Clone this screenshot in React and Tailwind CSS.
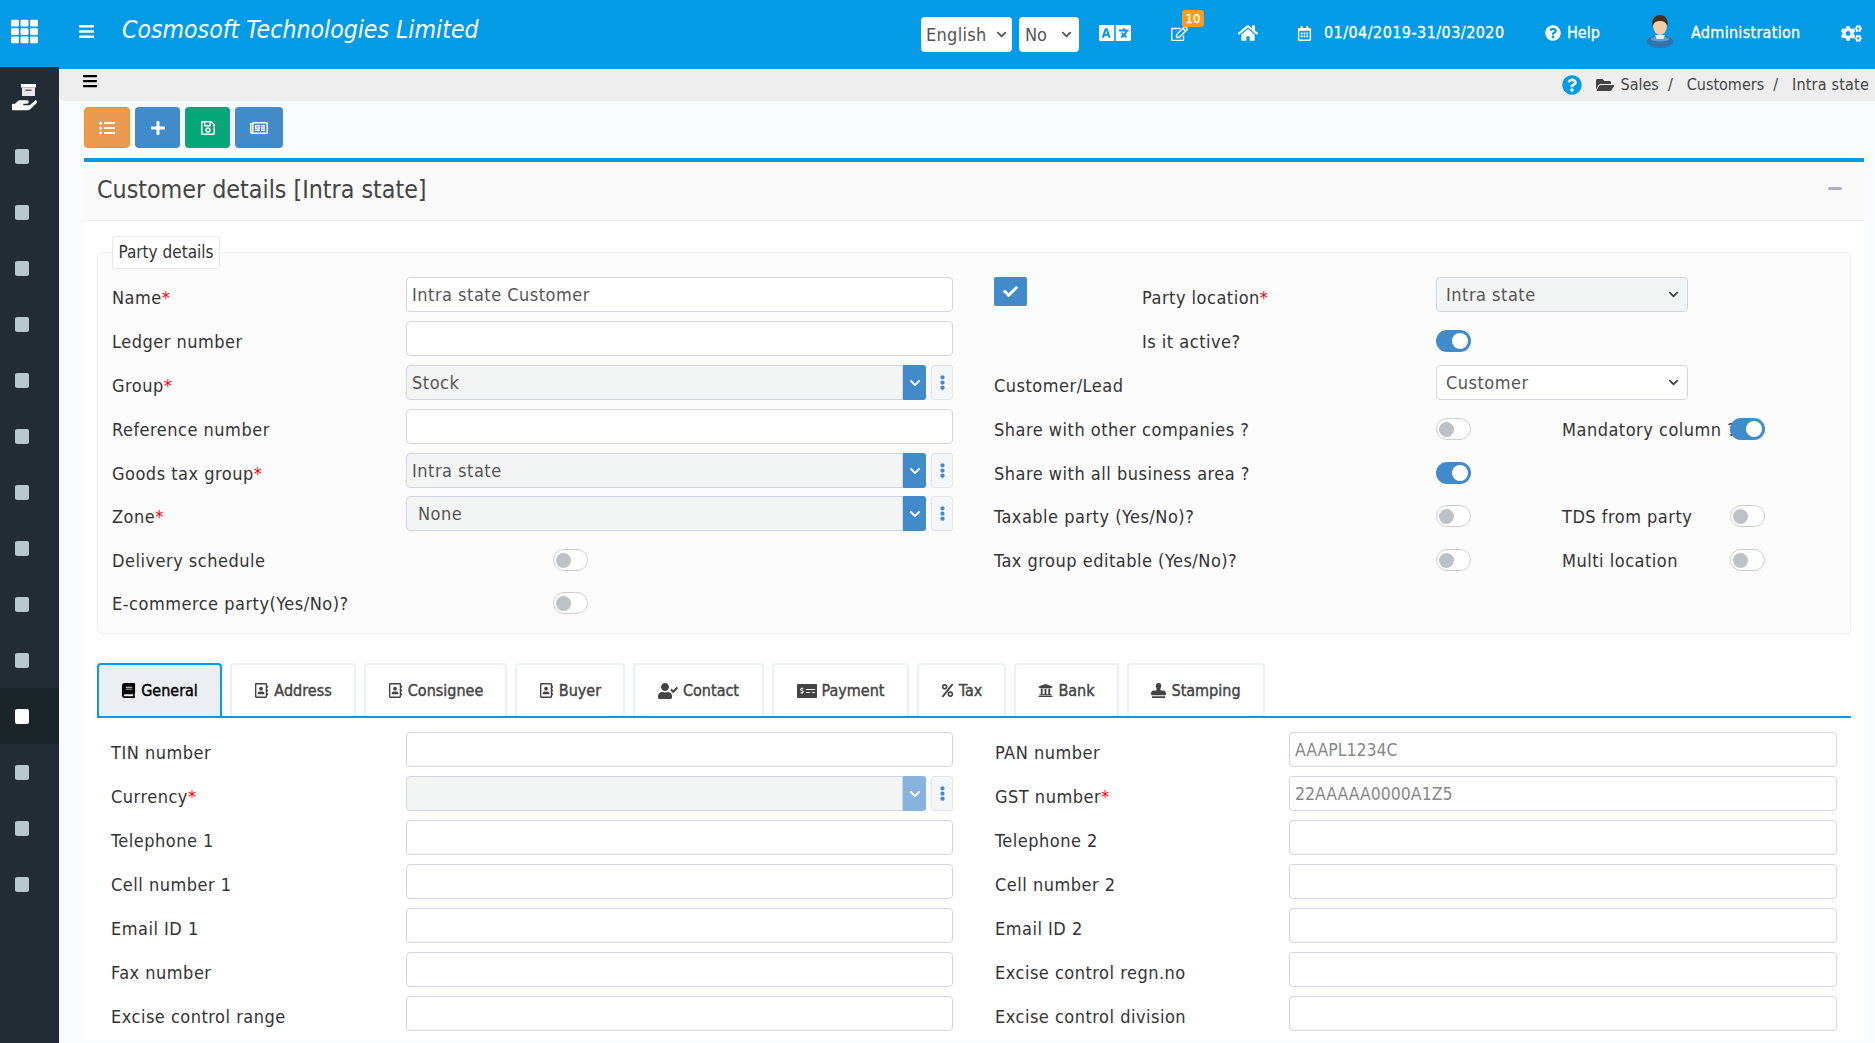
import React from 'react';
import {
  FaTh, FaBars, FaLanguage, FaRegEdit, FaHome, FaRegCalendarAlt, FaQuestionCircle, FaCogs, FaFolderOpen,
  FaListUl, FaPlus, FaRegSave, FaRegNewspaper, FaCheck, FaChevronDown, FaEllipsisV, FaBook, FaRegAddressBook,
  FaUserCheck, FaMoneyCheckAlt, FaPercent, FaUniversity, FaStamp, FaHandHolding,
} from 'react-icons/fa';

const Req = () => <span className="text-[#ff0000]">*</span>;

const Label = ({ children, req, className = '' }) => (
  <div className={`text-[18px] tracking-[0.5px] text-[#333] whitespace-nowrap pt-[7px] ${className}`}>
    {children}
    {req && <Req />}
  </div>
);

const TextBox = ({ value, dim }) => (
  <div className={`h-[35px] w-full border border-[#d3d5e0] rounded-[4px] bg-white px-[5px] ${dim ? 'text-[17.5px] leading-[35px] text-[#888]' : 'text-[18px] leading-[33px] tracking-[0.5px] text-[#555]'}`}>
    {value}
  </div>
);

const Picker = ({ value, disabled, pad = 'pl-[5px]' }) => (
  <div className="flex h-[35px] w-[547px]">
    <div className={`flex-1 h-full border border-[#d3d5e0] rounded-l-[4px] bg-[#f3f5f5] text-[18px] tracking-[0.5px] leading-[33px] text-[#555] ${pad}`}>{value}</div>
    <div className={`w-[23px] h-full rounded-r-[3px] flex items-center justify-center text-white ${disabled ? 'bg-[#86b4dc]' : 'bg-[#428bca]'}`}>
      <FaChevronDown size={12} />
    </div>
    <div className="w-[22px] h-full ml-[5px] border border-[#e3e5ea] rounded-[3px] bg-[#f5f6f7] flex items-center justify-center text-[#428bca]">
      <FaEllipsisV size={15} />
    </div>
  </div>
);

const Toggle = ({ on, className = '' }) => (
  on ? (
    <div className={`w-[35px] h-[22px] rounded-full bg-[#428bca] flex items-center justify-end pr-[3px] ${className}`}>
      <div className="w-[16px] h-[16px] rounded-full bg-white" />
    </div>
  ) : (
    <div className={`w-[35px] h-[22px] rounded-full border border-[#ccd0d5] bg-white flex items-center pl-[2px] ${className}`}>
      <div className="w-[15px] h-[15px] rounded-full bg-[#bcc2c6]" />
    </div>
  )
);

const NativeSelect = ({ value, tint }) => (
  <div className={`h-[35px] w-[252px] border border-[#d3d5e0] rounded-[4px] flex items-center justify-between pl-[9px] pr-[8px] text-[18px] tracking-[0.5px] text-[#555] ${tint ? 'bg-[#f3f5f5]' : 'bg-white'}`}>
    {value}
    <FaChevronDown size={11} className="text-[#444]" />
  </div>
);

const leftRows = [
  { label: 'Name', req: true, h: 'h-[44px]', control: <TextBox value="Intra state Customer" /> },
  { label: 'Ledger number', h: 'h-[44px]', control: <TextBox /> },
  { label: 'Group', req: true, h: 'h-[44px]', control: <Picker value="Stock" /> },
  { label: 'Reference number', h: 'h-[44px]', control: <TextBox /> },
  { label: 'Goods tax group', req: true, h: 'h-[43px]', control: <Picker value="Intra state" /> },
  { label: 'Zone', req: true, h: 'h-[44px]', control: <Picker value="None" pad="pl-[11px]" /> },
  { label: 'Delivery schedule', h: 'h-[43px]', control: <Toggle className="ml-[147px] mt-[9px]" /> },
  { label: 'E-commerce party(Yes/No)?', h: 'h-[44px]', control: <Toggle className="ml-[147px] mt-[9px]" /> },
];

// one row of the right half of party details
const SwitchRow = ({ label, on, h = 'h-[44px]', second, secondOn }) => (
  <div className={`flex ${h}`}>
    <Label className="w-[442px]">{label}</Label>
    <Toggle on={on} className="mt-[9px]" />
    {second && (
      <>
        <Label className="w-[168px] ml-[91px]">{second}</Label>
        <Toggle on={secondOn} className="mt-[9px] relative" />
      </>
    )}
  </div>
);

const tabs = [
  { name: 'General', Icon: FaBook, w: 'w-[125px]', size: 15 },
  { name: 'Address', Icon: FaRegAddressBook, w: 'w-[126px]', size: 15 },
  { name: 'Consignee', Icon: FaRegAddressBook, w: 'w-[143px]', size: 15 },
  { name: 'Buyer', Icon: FaRegAddressBook, w: 'w-[110px]', size: 15 },
  { name: 'Contact', Icon: FaUserCheck, w: 'w-[131px]', size: 20 },
  { name: 'Payment', Icon: FaMoneyCheckAlt, w: 'w-[137px]', size: 20 },
  { name: 'Tax', Icon: FaPercent, w: 'w-[89px]', size: 13 },
  { name: 'Bank', Icon: FaUniversity, w: 'w-[105px]', size: 15 },
  { name: 'Stamping', Icon: FaStamp, w: 'w-[138px]', size: 15 },
];

const generalRows = [
  ['TIN number', <TextBox />, 'PAN number', <TextBox value="AAAPL1234C" dim />],
  ['Currency', <Picker disabled />, 'GST number', <TextBox value="22AAAAA0000A1Z5" dim />, true],
  ['Telephone 1', <TextBox />, 'Telephone 2', <TextBox />],
  ['Cell number 1', <TextBox />, 'Cell number 2', <TextBox />],
  ['Email ID 1', <TextBox />, 'Email ID 2', <TextBox />],
  ['Fax number', <TextBox />, 'Excise control regn.no', <TextBox />],
  ['Excise control range', <TextBox />, 'Excise control division', <TextBox />],
];

const Avatar = () => (
  <svg width="28" height="33" viewBox="0 0 28 33">
    <ellipse cx="14" cy="26.5" rx="13" ry="6.5" fill="#2f74ae" />
    <ellipse cx="14" cy="24" rx="9" ry="2.5" fill="#5f9fd2" />
    <path d="M9 20h10l-1.5 4h-7z" fill="#e8eef2" />
    <ellipse cx="14" cy="11" rx="7" ry="9" fill="#f3cfa8" />
    <path d="M6.5 12C5 3 10 0 14 0s9 3 7.500 12c-1-4-3-6-7.500-6s-6.500 2-7.500 6z" fill="#4a2c1a" />
  </svg>
);

const BoxInHand = () => (
  <div className="flex flex-col items-start text-white">
    <svg width="15" height="12" viewBox="0 0 15 12" className="ml-[9px]">
      <rect x="0" y="0" width="15" height="3.500" fill="#fff" />
      <rect x="1" y="3.500" width="13" height="8.500" fill="#e6e8ea" />
      <rect x="4.500" y="5.500" width="6" height="1.500" fill="#5a646a" />
    </svg>
    <FaHandHolding size={25} className="-mt-[14px] origin-top scale-y-[1.2]" />
  </div>
);

const App = () => {
  return (
    <div className="h-screen overflow-hidden flex flex-col bg-[#fafbfe] text-[#333] font-['DejaVu_Sans_Condensed','DejaVu_Sans',sans-serif] [font-stretch:condensed]">
      {/* top bar */}
      <div className="h-[69px] shrink-0 bg-[#039be5] text-white flex items-center relative z-10">
        <FaTh size={27} className="ml-[11px] -mt-[6px]" />
        <FaBars size={17} className="ml-[40px] -mt-[6px]" />
        <div className="ml-[27px] -mt-[8px] italic text-[24.6px]">Cosmosoft Technologies Limited</div>
        <div className="ml-auto -mt-[3px] flex items-center text-[16px] [-webkit-text-stroke:0.3px]">
          <div className="w-[91px] h-[35px] bg-white rounded-[4px] text-[#555] text-[18px] tracking-[0.3px] [-webkit-text-stroke:0px] flex items-center justify-between pl-[5px] pr-[5px] mt-[2px]">
            English <FaChevronDown size={11} />
          </div>
          <div className="w-[60px] h-[35px] ml-[7px] bg-white rounded-[4px] text-[#555] text-[18px] [-webkit-text-stroke:0px] flex items-center justify-between pl-[6px] pr-[7px] mt-[2px]">
            No <FaChevronDown size={11} />
          </div>
          <FaLanguage size={32} className="ml-[20px]" />
          <div className="relative ml-[40px]">
            <FaRegEdit size={17} />
            <span className="absolute -top-[15px] left-[11px] w-[22px] h-[17px] rounded-[3px] bg-[#f99b1c] text-[13px] leading-[17px] text-center">10</span>
          </div>
          <FaHome size={20} className="ml-[50px]" />
          <FaRegCalendarAlt size={15} className="ml-[39px]" />
          <span className="ml-[12px] w-[181px] tracking-[0.45px]">01/04/2019-31/03/2020</span>
          <FaQuestionCircle size={16} className="ml-[40px]" />
          <span className="ml-[6px] w-[35px]">Help</span>
          <div className="ml-[44px] -mt-[3px]"><Avatar /></div>
          <span className="ml-[17px] w-[109px] tracking-[0.3px]">Administration</span>
          <FaCogs size={21} className="ml-[41px] mr-[13px]" />
        </div>
      </div>

      <div className="flex-1 flex min-h-0">
        {/* sidebar */}
        <div className="w-[59px] shrink-0 bg-[#212d33] -mt-[2px] flex flex-col items-stretch relative z-20">
          <div className="h-[61px] pl-[12px] pt-[17px]">
            <BoxInHand />
          </div>
          {Array.from({ length: 14 }).map((_, i) => (
            <div key={i} className={`h-[56px] flex items-center pl-[15px] ${i === 10 ? 'bg-[#1b2429]' : ''}`}>
              <div className={`w-[14px] h-[15px] rounded-[2px] ${i === 10 ? 'bg-white' : 'bg-[#b8c7ce]'}`} />
            </div>
          ))}
        </div>

        <div className="flex-1 min-w-0">
          {/* breadcrumb */}
          <div className="h-[32px] bg-[#eeeeee] rounded-bl-[6px] flex items-center text-[16px]">
            <FaBars size={16} className="ml-[23px] -mt-[8px] text-black" />
            <div className="ml-auto flex items-center text-[#444] pr-[6px]">
              <FaQuestionCircle size={20} className="text-[#039be5]" />
              <FaFolderOpen size={18} className="ml-[14px]" />
              <span className="ml-[7px]">Sales</span>
              <span className="ml-[9px]">/</span>
              <span className="ml-[14px]">Customers</span>
              <span className="ml-[9px]">/</span>
              <span className="ml-[14px] tracking-[0.2px]">Intra state</span>
            </div>
          </div>

          {/* action buttons */}
          <div className="flex gap-[5px] pl-[25px] pt-[6px] text-white">
            <div className="w-[46px] h-[41px] rounded-[4px] bg-[#ec9a52] border border-[#e8962c] flex items-center justify-center"><FaListUl size={16} /></div>
            <div className="w-[45px] h-[41px] rounded-[4px] bg-[#428bca] flex items-center justify-center"><FaPlus size={16} /></div>
            <div className="w-[45px] h-[41px] rounded-[4px] bg-[#05a677] flex items-center justify-center"><FaRegSave size={16} /></div>
            <div className="w-[48px] h-[41px] rounded-[4px] bg-[#428bca] flex items-center justify-center"><FaRegNewspaper size={18} /></div>
          </div>

          {/* card */}
          <div className="ml-[25px] mr-[11px] mt-[10px] border-t-[4px] border-[#039be5] bg-white">
            <div className="h-[59px] bg-[#fafafa] border-b border-[#f0f0f0] flex items-center justify-between pl-[13px] pr-[22px]">
              <span className="text-[24.75px] text-[#444] -mt-[2px]">Customer details [Intra state]</span>
              <span className="w-[14px] h-[3px] bg-[#a9b2c2] rounded-sm -mt-[5px]" />
            </div>

            <div className="pl-[13px] pr-[13px]">
              {/* party details */}
              <div className="relative mt-[31px] h-[382px] border border-[#f0f0f2] rounded-[5px] bg-[#fcfcfc] pl-[14px] pt-[24px]">
                <div className="absolute -top-[17px] left-[14px] w-[108px] h-[33px] bg-white border border-[#e8e8ec] rounded-[3px] text-[17px] leading-[31px] text-center">Party details</div>
                <div className="flex">
                  <div className="w-[882px] shrink-0">
                    {leftRows.map(row => (
                      <div key={row.label} className={`flex ${row.h}`}>
                        <Label req={row.req} className="w-[294px]">{row.label}</Label>
                        <div className="w-[547px]">{row.control}</div>
                      </div>
                    ))}
                  </div>
                  <div className="flex-1 min-w-0">
                    <div className="flex h-[44px]">
                      <div className="w-[33px] h-[29px] rounded-[2px] bg-[#428bca] text-white flex items-center justify-center"><FaCheck size={15} /></div>
                      <Label req className="ml-[115px] w-[294px]">Party location</Label>
                      <NativeSelect value="Intra state" tint />
                    </div>
                    <div className="flex h-[44px]">
                      <Label className="ml-[148px] w-[294px]">Is it active?</Label>
                      <Toggle on className="mt-[9px]" />
                    </div>
                    <div className="flex h-[44px]">
                      <Label className="w-[442px]">Customer/Lead</Label>
                      <NativeSelect value="Customer" />
                    </div>
                    <SwitchRow label="Share with other companies ?" second="Mandatory column ?" secondOn />
                    <SwitchRow label="Share with all business area ?" on h="h-[43px]" />
                    <SwitchRow label="Taxable party (Yes/No)?" second="TDS from party" />
                    <SwitchRow label="Tax group editable (Yes/No)?" second="Multi location" h="h-[43px]" />
                  </div>
                </div>
              </div>

              {/* tabs */}
              <div className="mt-[29px] flex gap-[8px] h-[55px] border-b-[2px] border-[#039be5]">
                {tabs.map(({ name, Icon, w, size }, i) => (
                  <div
                    key={name}
                    className={`${w} flex items-center justify-center gap-[5px] text-[16px] [-webkit-text-stroke:0.4px] rounded-t-[4px] ${i === 0 ? 'bg-[#ebeef2] border-x-[2px] border-t-[2px] border-[#039be5] text-black' : 'bg-white border-x-[2px] border-t-[2px] border-[#edf0f4] text-[#444]'}`}
                  >
                    <Icon size={size} />
                    {name}
                  </div>
                ))}
              </div>

              {/* general tab */}
              <div className="pt-[14px]">
                {generalRows.map(([l1, c1, l2, c2, req2]) => (
                  <div key={l1} className="flex h-[44px]">
                    <Label req={l1 === 'Currency'} className="w-[309px] pl-[14px]">{l1}</Label>
                    <div className="w-[547px]">{c1}</div>
                    <Label req={req2} className="w-[336px] pl-[42px]">{l2}</Label>
                    <div className="w-[548px]">{c2}</div>
                  </div>
                ))}
              </div>
            </div>
          </div>
        </div>
      </div>
    </div>
  );
};

export default App;
